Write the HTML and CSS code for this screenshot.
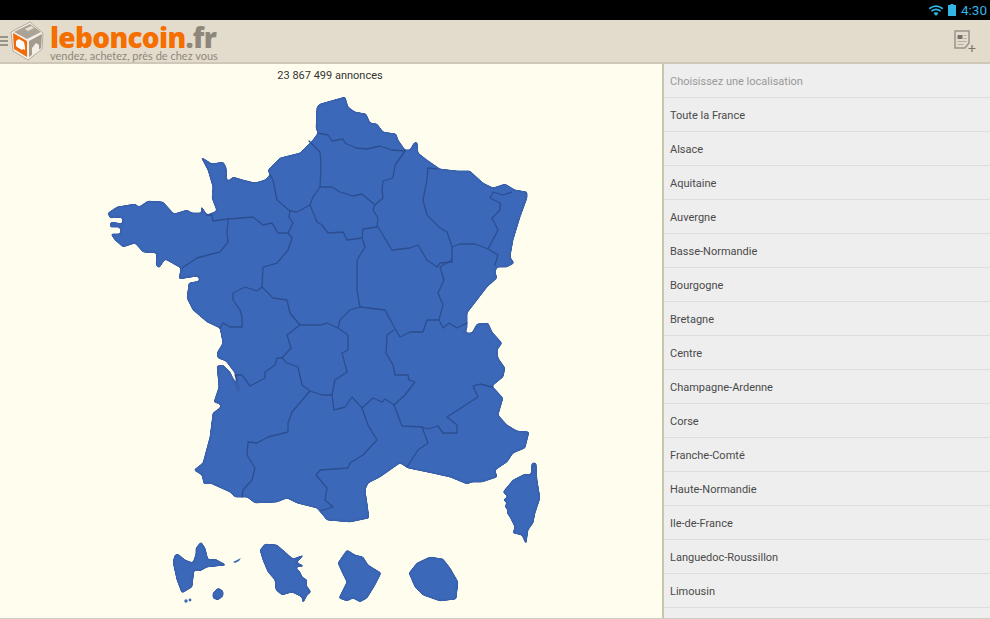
FILE: index.html
```html
<!DOCTYPE html>
<html lang="fr">
<head>
    <meta charset="UTF-8">
    <meta name="viewport" content="width=device-width, initial-scale=1.0">
    <title>leboncoin.fr</title>
    <link rel="stylesheet" href="styles.css">
</head>
<body>

<div class="status-bar">
    <svg class="wifi" viewBox="0 0 16 12" width="16" height="12">
        <path d="M8 12 5.3 9.1Q8 7.2 10.7 9.1Z" fill="#33b5e5"/>
        <path d="M1.2 4.8Q8-.4 14.8 4.8M3.4 7.2Q8 3.6 12.6 7.2" fill="none" stroke="#33b5e5" stroke-width="1.7"/>
    </svg>
    <svg class="battery" viewBox="0 0 8 12" width="8" height="12">
        <path d="M2.5 0h3v1H8v11H0V1h2.5Z" fill="#33b5e5"/>
    </svg>
    <span class="clock">4:30</span>
</div>

<header class="action-bar">
    <div class="logo">
        <div class="menu-icon"><span></span><span></span><span></span></div>
        <svg class="cube" viewBox="0 0 34 40" width="34" height="40">
            <path d="M1 11 20 1 33 12 32 28 18 39 3 30Z" fill="#f3efe6" stroke="#b5ae9f"/>
            <path d="M3 12 17 20 17 36 4 28Z" fill="#f26a0a"/>
            <path d="M6 20l3-2 5 3 1 5v3l-2-1-1 1-5-3-1-1Z" fill="#fff"/>
            <path d="M19 20 32 13 31 27 19 36Z" fill="#a39b8c"/>
            <path d="M22 27l4-5 3 2v6l-7 4Z" fill="#f3efe6"/>
            <path d="M4 11 20 3 31 11 17 18Z" fill="#aaa396"/>
            <path d="M15 8l6-3 3 2-6 3Z" fill="#e6e1d6"/>
        </svg>
        <div class="logo-text">
            <div class="logo-name">leboncoin<span>.fr</span></div>
            <div class="logo-tag">vendez, achetez, près de chez vous</div>
        </div>
    </div>
    <svg class="new-ad" viewBox="0 0 22 22" width="22" height="22">
        <path d="M1 1h14v12l-4 5H1Z" fill="none" stroke="#99938a" stroke-width="1.5"/>
        <path d="M3.500 5h5v4h-5Z" fill="#77736a"/>
        <path d="M9.500 5h3v1h-3ZM9.500 8h3v1h-3ZM3.500 11h9v1h-9ZM3.500 14h6v1h-6Z" fill="#b5b0a4"/>
        <path d="M18 15v7M14.500 18.500h7" stroke="#77736a" stroke-width="1.2"/>
    </svg>
</header>

<main class="content">
    <section class="map-pane">
        <p class="ad-count">23 867 499 annonces</p>
        <svg class="map" viewBox="0 84 662 535">
            <defs>
                <!-- rounds off the corners of the traced shapes -->
                <filter id="smooth" x="0" y="0" width="1" height="1" color-interpolation-filters="sRGB">
                    <feGaussianBlur stdDeviation="1"/>
                    <feComponentTransfer>
                        <feFuncA type="linear" slope="5" intercept="-2"/>
                    </feComponentTransfer>
                </filter>
                <filter id="soft" x="0" y="0" width="1" height="1" color-interpolation-filters="sRGB">
                    <feGaussianBlur stdDeviation="0.45"/>
                </filter>
            </defs>
            <g class="shapes">
                <!-- metropole -->
                <path class="land" d="M345 97 348 107 355 112 366 114 370 123 377 124 383 132 396 134 398 140 405 150 410 150 414 143 417 142 418 153 427 160 440 169 457 171 470 171 483 183 493 188 505 184 515 190 527 192 527 198 520 217 513 240 510 257 514 263 507 267 497 267 495 272 497 278 487 287 477 300 467 313 467 328 465 333 472 333 477 324 488 323 492 332 502 343 497 350 498 358 505 368 503 377 492 386 503 398 498 415 507 425 517 431 529 432 525 448 513 453 507 462 495 470 497 477 482 482 472 482 467 484 450 477 432 473 408 468 400 463 390 470 380 477 368 483 365 490 367 503 369 518 350 522 327 520 317 508 297 503 287 498 277 502 255 503 247 497 235 497 230 492 210 483 204 484 202 475 194 470 203 463 210 437 213 413 221 407 220 404 214 402 219 387 217 366 223 365 230 372 239 391 235 373 226 361 218 358 217 353 223 343 220 328 207 322 193 310 187 298 189 283 200 281 198 276 179 279 181 268 165 259 159 268 156 265 157 253 143 252 135 243 123 247 115 240 111 234 121 234 120 227 110 227 111 222 123 224 122 217 110 218 108 213 117 207 135 204 139 207 148 201 163 202 174 214 187 210 192 213 202 213 201 206 207 215 217 211 212 198 213 187 208 170 201 157 212 164 223 162 226 167 227 182 233 177 243 180 255 183 265 180 270 175 268 170 280 158 300 153 313 140 318 133 316 128 317 107 320 104Z"/>
                <!-- corse -->
                <path class="land" d="M532 463 536 463 537 480 540 498 535 513 533 523 528 530 526 544 522 535 513 533 515 527 510 517 507 513 508 510 505 507 507 502 503 500 508 497 503 492 513 480 525 474 531 475Z"/>
                <!-- outre-mer -->
                <path class="land" d="M175 555 173 562 177 580 182 593 192 587 194 570 200 571 207 567 226 565 215 559 208 560 205 548 201 542 196 548 196 554 193 563 185 560 178 554Z"/>
                <path class="land" d="M218 588 213 593 213 598 218 600 223 596 223 591Z"/>
                <path class="land" d="M260 550 265 544 277 545 285 552 293 559 304 555 298 561 295 562 304 566 295 567 300 572 302 577 307 580 306 585 311 592 307 595 303 603 302 597 292 592 282 595 276 590 275 580 268 572 263 560Z"/>
                <path class="land" d="M347 550 355 555 363 557 368 565 381 573 375 585 367 598 360 602 353 598 347 601 339 598 347 582 342 572 338 563 342 557Z"/>
                <path class="land" d="M417 563 430 557 443 559 450 568 458 582 456 599 440 601 423 595 415 587 409 573Z"/>
            </g>
            <path class="islet" d="M233 562 241 558 239 561 235 563Z"/>
            <circle class="islet" cx="186" cy="601" r="1.7"/>
            <circle class="islet" cx="190" cy="600" r="1.4"/>
            <!-- limites de regions -->
            <g class="borders">
                <path d="M318 133 328 135 332 141 343 139 345 143 356 148 367 149 380 146 392 150 405 151"/>
                <path d="M309 141 320 152 321 165 320 187 332 187 340 192 353 196 362 194 375 205"/>
                <path d="M405 151 395 165 393 178 383 181 382 190 383 198 375 205 373 210 378 218 377 227 363 229 362 238 347 240 343 232 328 233 322 225 317 222 310 205"/>
                <path d="M320 187 313 197 310 205 297 212 290 211 277 200 273 180 270 175"/>
                <path d="M207 215 212 215 213 221 228 219 253 217 263 225 272 223 278 233 288 233 292 238 288 250 277 263 263 267 262 287 257 291 245 287 233 293 233 300 240 310 242 317 242 327 230 327 223 323 220 328"/>
                <path d="M290 211 289 217 293 223 288 233"/>
                <path d="M228 219 227 233 228 242 220 252 208 255 197 258 182 268"/>
                <path d="M262 287 273 298 287 300 290 313 300 325 287 335 291 348 282 358 277 358 275 365 265 372 265 378 250 386 242 375 235 375 237 380"/>
                <path d="M282 358 287 363 298 367 302 385 310 391 292 412 288 423 288 432 268 437 257 443 248 442 247 455 255 468 252 480 243 490 242 497"/>
                <path d="M300 325 320 325 327 323 338 328 348 335 348 350 342 353 347 372 335 380 332 395 322 395 310 391"/>
                <path d="M362 238 365 247 357 260 357 290 360 307 350 310 340 320 338 328"/>
                <path d="M360 307 385 310 393 325 400 337 410 332 423 332 427 320 439 320 443 305 438 293 444 280 440 267 452 260"/>
                <path d="M378 227 392 250 410 248 418 245 427 260 437 267 440 263 452 262 452 247 447 232 440 228 427 215 423 200 427 180 428 168 437 169"/>
                <path d="M452 247 460 244 475 244 488 249 498 255 495 265"/>
                <path d="M488 249 498 230 492 218 500 210 500 203 490 198 493 192 503 195 512 192"/>
                <path d="M467 323 457 328 449 323 443 328 439 320"/>
                <path d="M394 330 387 335 386 353 393 365 395 375 408 375 409 380 415 382 405 395 394 405 385 399 382 402 373 398 362 408 352 397 345 407 334 410 332 395"/>
                <path d="M362 408 368 425 377 440 363 455 350 463 348 468 320 470 316 475 327 488 325 500 333 507 320 511"/>
                <path d="M394 405 402 426 422 427 428 443 418 450 407 467"/>
                <path d="M422 427 428 429 438 426 443 433 457 433 457 425 447 417 478 397 473 386 480 384 492 387"/>
            </g>
        </svg>
    </section>

    <aside class="region-list">
        <div class="region-row region-title">Choisissez une localisation</div>
        <div class="region-row">Toute la France</div>
        <div class="region-row">Alsace</div>
        <div class="region-row">Aquitaine</div>
        <div class="region-row">Auvergne</div>
        <div class="region-row">Basse-Normandie</div>
        <div class="region-row">Bourgogne</div>
        <div class="region-row">Bretagne</div>
        <div class="region-row">Centre</div>
        <div class="region-row">Champagne-Ardenne</div>
        <div class="region-row">Corse</div>
        <div class="region-row">Franche-Comté</div>
        <div class="region-row">Haute-Normandie</div>
        <div class="region-row">Ile-de-France</div>
        <div class="region-row">Languedoc-Roussillon</div>
        <div class="region-row">Limousin</div>
    </aside>
</main>

</body>
</html>
```

FILE: styles.css
```css
* {
    margin: 0;
    padding: 0;
    box-sizing: border-box;
}

html,
body {
    height: 619px;
    overflow: hidden;
}

body {
    font-family: 'Roboto', sans-serif;
    background: #fffeee;
    color: #444;
}

.status-bar {
    height: 20px;
    background: #000;
    display: flex;
    align-items: center;
    justify-content: flex-end;
    gap: 4px;
    padding-right: 3px;
}

.status-bar .wifi {
    margin-right: 0;
}

.status-bar .clock {
    margin-left: 1px;
    color: #33b5e5;
    font-size: 13.5px;
}

.action-bar {
    height: 44px;
    background: #e3dccd;
    border-bottom: 2px solid #cfc8b8;
    display: flex;
    align-items: center;
    justify-content: space-between;
    padding-right: 14px;
}

.logo {
    display: flex;
    align-items: center;
}

.menu-icon {
    width: 8px;
    display: flex;
    flex-direction: column;
    gap: 2px;
}

.menu-icon span {
    height: 2px;
    background: #99948a;
}

.cube {
    margin-left: 2px;
}

.logo-text {
    margin-left: 6px;
    margin-top: 4px;
}

.logo-name {
    font-family: 'Open Sans', sans-serif;
    font-weight: 800;
    font-size: 28px;
    line-height: 25px;
    color: #f56e00;
    letter-spacing: -0.7px;
}

.logo-name span {
    color: #8e877a;
}

.logo-tag {
    font-family: 'Lato', sans-serif;
    font-size: 11px;
    line-height: 11px;
    color: #8e877a;
    white-space: nowrap;
}

.content {
    height: 555px;
    display: flex;
    border-bottom: 1px solid #cfcfc4;
}

.map-pane {
    width: 664px;
    flex-shrink: 0;
    border-right: 2px solid #c9c6ae;
    overflow: hidden;
}

.ad-count {
    height: 20px;
    line-height: 23px;
    padding-right: 2px;
    font-size: 11px;
    text-align: center;
    color: #333;
}

.map {
    display: block;
    width: 662px;
    height: 535px;
}

.shapes {
    filter: url(#smooth);
}

.land {
    fill: #3c68b9;
    stroke: #34599f;
    stroke-width: 1;
    stroke-linejoin: round;
}

.islet {
    fill: #3c68b9;
}

.borders {
    fill: none;
    stroke: #2c4e90;
    stroke-width: 1.3;
    stroke-linejoin: round;
    stroke-linecap: round;
    filter: url(#soft);
}

.region-list {
    flex: 1;
    background: #eee;
    overflow: hidden;
}

.region-row {
    height: 34px;
    line-height: 35px;
    padding-left: 6px;
    font-size: 11px;
    color: #4a4a4a;
    border-bottom: 1px solid #ddd;
}

.region-title {
    color: #999;
}
```
